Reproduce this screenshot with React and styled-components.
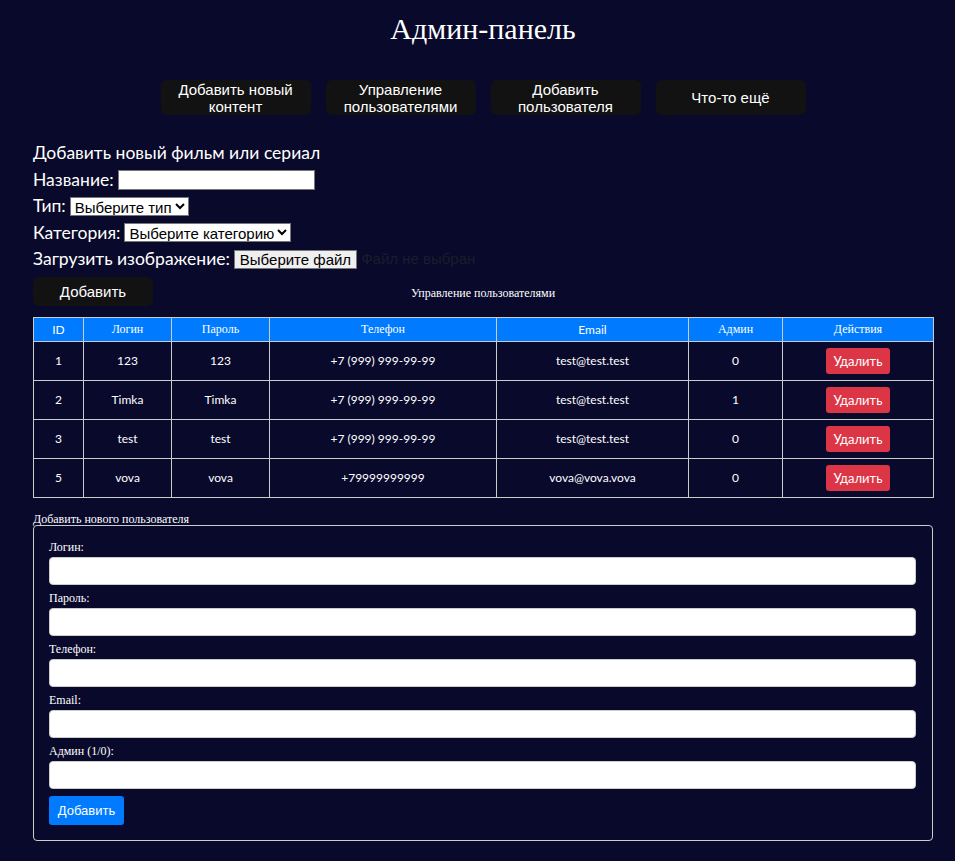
import styled, { createGlobalStyle } from 'styled-components';

const GlobalStyle = createGlobalStyle`
	html, body {
		margin: 0;
		padding: 0;
		background: #09092b;
	}
	body {
		color: #ffffff;
		font-family: "Liberation Serif", serif;
	}
`;

//Page
const StyledPage = styled.div`
	width: 900px;
	margin-left: 33px;
	padding-bottom: 20px;
`;

const StyledTitle = styled.h1`
	margin: 10px 0 0;
	font-size: 30px;
	font-weight: normal;
	line-height: 37px;
	text-align: center;
`;

//Nav
const StyledNav = styled.nav`
	display: flex;
	justify-content: center;
	gap: 15px;
	margin-top: 33px;
`;

const StyledNavButton = styled.button`
	width: 150px;
	height: 35px;
	padding: 0 12px;
	border: none;
	border-radius: 6px;
	background: #121212;
	color: #ffffff;
	font-family: "Liberation Sans", Arial, sans-serif;
	font-size: 15px;
	line-height: 17px;
`;

//Content form
const StyledContentForm = styled.section`
	margin-top: 25px;
	font-family: Lato, "Noto Sans", sans-serif;
	font-size: 17.5px;
`;

const StyledRow = styled.div`
	display: flex;
	align-items: center;
	gap: 4px;
	height: 26.5px;
	line-height: 20px;
`;

const StyledTextInput = styled.input`
	width: 197px;
	height: 20px;
	box-sizing: border-box;
	border: 1px solid #767676;
	background: #ffffff;
	padding: 0 2px;
`;

const StyledSelect = styled.select`
	height: 19px;
	box-sizing: border-box;
	border: 1px solid #767676;
	border-radius: 0;
	background: #ffffff;
	color: #000000;
	font-family: "Liberation Sans", Arial, sans-serif;
	font-size: 15px;
	padding: 0;
`;

const StyledFileButton = styled.span`
	display: inline-block;
	height: 19px;
	box-sizing: border-box;
	padding: 0 5px;
	border: 1px solid #767676;
	background: #efefef;
	color: #000000;
	font-family: "Liberation Sans", Arial, sans-serif;
	font-size: 15px;
	line-height: 17px;
`;

const StyledFileHint = styled.span`
	color: #1c1c2c;
	font-family: "Liberation Sans", Arial, sans-serif;
	font-size: 15px;
`;

const StyledActionRow = styled.div`
	display: grid;
	grid-template-columns: 1fr auto 1fr;
	align-items: center;
	margin-top: 4px;
`;

const StyledDarkButton = styled.button`
	justify-self: start;
	width: 120px;
	height: 29px;
	border: none;
	border-radius: 6px;
	background: #121212;
	color: #ffffff;
	font-family: "Liberation Sans", Arial, sans-serif;
	font-size: 15px;
`;

const StyledCaption = styled.div`
	font-family: "Liberation Serif", serif;
	font-size: 12px;
	padding-top: 5px;
`;

//Users table
const StyledTable = styled.table`
	width: 900px;
	margin-top: 11px;
	border-collapse: collapse;
	table-layout: fixed;
	border: 1px solid #cccccc;
`;

const StyledHeadCell = styled.th`
	height: 23px;
	padding: 0;
	border: 1px solid #cccccc;
	background: #007bff;
	color: #ffffff;
	font-family: ${p => (p.$latin ? 'Lato, "Liberation Sans", sans-serif' : '"Liberation Serif", serif')};
	font-size: 12px;
	font-weight: normal;
	text-align: center;
`;

const StyledCell = styled.td`
	height: 38px;
	padding: 0;
	border: 1px solid #cccccc;
	font-family: Lato, "Noto Sans", sans-serif;
	font-size: 12px;
	text-align: center;
`;

const StyledDeleteButton = styled.button`
	width: 64px;
	height: 26px;
	border: none;
	border-radius: 3px;
	background: #dc3545;
	color: #ffffff;
	font-family: Lato, "Noto Sans", sans-serif;
	font-size: 13px;
`;

//New user form
const StyledSubTitle = styled.div`
	margin-top: 15px;
	font-size: 12px;
	line-height: 12px;
`;

const StyledUserBox = styled.div`
	margin-top: 0;
	padding: 15px 16px 15px 15px;
	border: 1px solid #cccccc;
	border-radius: 4px;
`;

const StyledField = styled.div`
	display: flex;
	flex-direction: column;
	gap: 3px;
	margin-bottom: 7px;
`;

const StyledLabel = styled.label`
	font-size: 12px;
	line-height: 13px;
`;

const StyledWideInput = styled.input`
	height: 28px;
	box-sizing: border-box;
	border: 1px solid #cccccc;
	border-radius: 4px;
	background: #ffffff;
`;

const StyledBlueButton = styled.button`
	display: block;
	width: 75px;
	height: 29px;
	border: none;
	border-radius: 3px;
	background: #007bff;
	color: #ffffff;
	font-family: "Liberation Sans", Arial, sans-serif;
	font-size: 13px;
`;

const navItems = ['Добавить новый контент', 'Управление пользователями', 'Добавить пользователя', 'Что-то ещё'];

const users = [
	{ id: 1, login: '123', password: '123', phone: '+7 (999) 999-99-99', email: 'test@test.test', admin: 0 },
	{ id: 2, login: 'Timka', password: 'Timka', phone: '+7 (999) 999-99-99', email: 'test@test.test', admin: 1 },
	{ id: 3, login: 'test', password: 'test', phone: '+7 (999) 999-99-99', email: 'test@test.test', admin: 0 },
	{ id: 5, login: 'vova', password: 'vova', phone: '+79999999999', email: 'vova@vova.vova', admin: 0 },
];

const columns = [
	{ title: 'ID', width: 50, latin: true },
	{ title: 'Логин', width: 88 },
	{ title: 'Пароль', width: 98 },
	{ title: 'Телефон', width: 227 },
	{ title: 'Email', width: 192, latin: true },
	{ title: 'Админ', width: 94 },
	{ title: 'Действия', width: 151 },
];

const userFields = ['Логин:', 'Пароль:', 'Телефон:', 'Email:', 'Админ (1/0):'];

const App = () => {
	return (
		<>
			<GlobalStyle />
			<StyledPage>
				<StyledTitle>Админ-панель</StyledTitle>

				<StyledNav>
					{navItems.map(item => (
						<StyledNavButton key={ item }>{ item }</StyledNavButton>
					))}
				</StyledNav>

				<StyledContentForm>
					<StyledRow>Добавить новый фильм или сериал</StyledRow>
					<StyledRow>
						Название: <StyledTextInput type="text" />
					</StyledRow>
					<StyledRow>
						Тип: <StyledSelect><option>Выберите тип</option></StyledSelect>
					</StyledRow>
					<StyledRow>
						Категория: <StyledSelect><option>Выберите категорию</option></StyledSelect>
					</StyledRow>
					<StyledRow>
						Загрузить изображение: <StyledFileButton>Выберите файл</StyledFileButton>
						<StyledFileHint>Файл не выбран</StyledFileHint>
					</StyledRow>
					<StyledActionRow>
						<StyledDarkButton>Добавить</StyledDarkButton>
						<StyledCaption>Управление пользователями</StyledCaption>
					</StyledActionRow>
				</StyledContentForm>

				<StyledTable>
					<colgroup>
						{columns.map(col => <col key={ col.title } style={{ width: col.width }} />)}
					</colgroup>
					<thead>
						<tr>
							{columns.map(col => (
								<StyledHeadCell key={ col.title } $latin={ col.latin }>{ col.title }</StyledHeadCell>
							))}
						</tr>
					</thead>
					<tbody>
						{users.map(user => (
							<tr key={ user.id }>
								<StyledCell>{ user.id }</StyledCell>
								<StyledCell>{ user.login }</StyledCell>
								<StyledCell>{ user.password }</StyledCell>
								<StyledCell>{ user.phone }</StyledCell>
								<StyledCell>{ user.email }</StyledCell>
								<StyledCell>{ user.admin }</StyledCell>
								<StyledCell>
									<StyledDeleteButton>Удалить</StyledDeleteButton>
								</StyledCell>
							</tr>
						))}
					</tbody>
				</StyledTable>

				<StyledSubTitle>Добавить нового пользователя</StyledSubTitle>
				<StyledUserBox>
					{userFields.map(field => (
						<StyledField key={ field }>
							<StyledLabel>{ field }</StyledLabel>
							<StyledWideInput type="text" />
						</StyledField>
					))}
					<StyledBlueButton>Добавить</StyledBlueButton>
				</StyledUserBox>
			</StyledPage>
		</>
	);
};

export default App;
